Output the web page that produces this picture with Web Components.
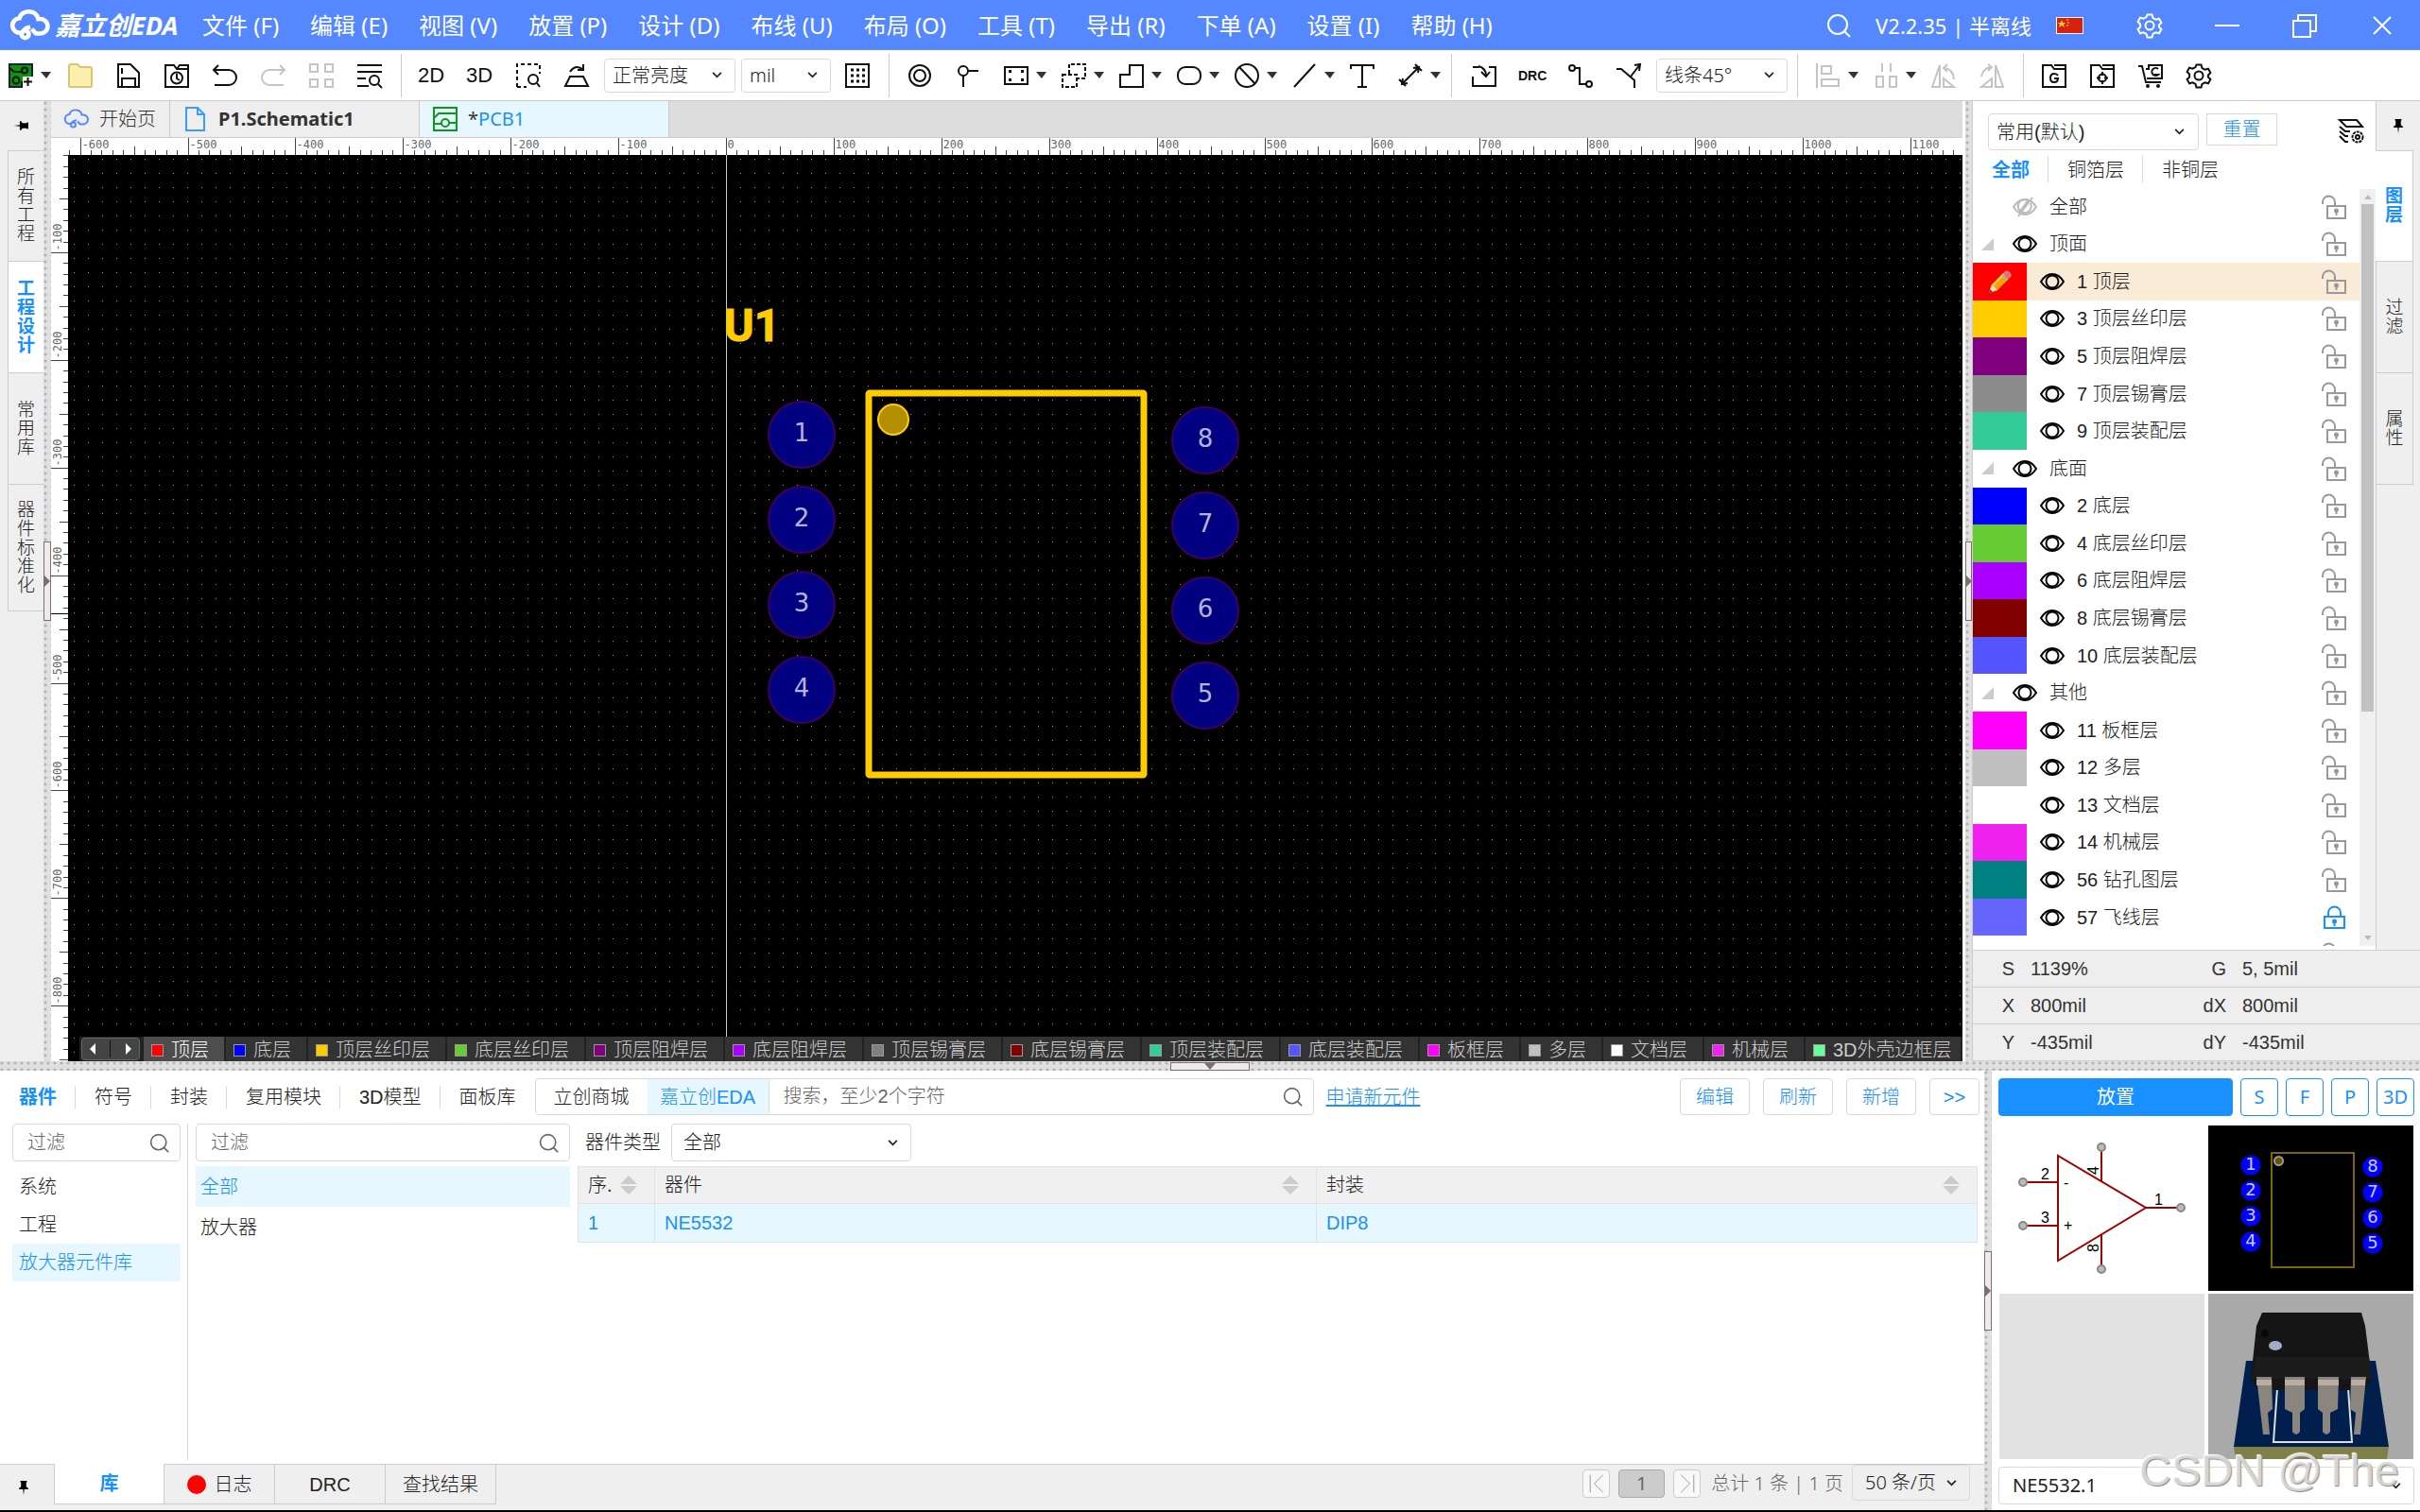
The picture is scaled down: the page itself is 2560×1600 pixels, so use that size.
<!DOCTYPE html>
<html lang="zh-CN">
<head>
<meta charset="utf-8">
<title>嘉立创EDA</title>
<style>
  :root {
    --blue: #1890ff;
    --brand: #5588ff;
    --pale: #e6f7ff;
    --panel: #efefef;
    --line: #cccccc;
    --arial: "Liberation Sans", "Noto Sans CJK SC", sans-serif;
    --segoe: "Noto Sans", "Noto Sans CJK SC", sans-serif;
  }
  body {
    margin: 0;
    font: 300 20px/24px var(--arial);
    color: #222;
    overflow: hidden;
  }
</style>
</head>
<body>
<eda-app></eda-app>

<script>
const RESET = `
  :host, *, *::before, *::after { box-sizing: border-box; }
  button, input, select {
    font: inherit; color: inherit; margin: 0; padding: 0;
    border: 0; background: none; border-radius: 0; outline: 0;
  }
  svg { display: block; flex: none; }
  a { color: var(--blue); }
`;

// every icon is drawn on a 26 x 26 box
const ICONS = {
  cloud: '<path d="M7 18H6a5 5 0 0 1-.5-10C6.500 4.500 10 3 13 3.500c3 .3 5 2.500 5.500 5 4-.5 6.500 2 6.500 5 0 3-2.500 5-5 5h-3l-3-3M7 18l3-3 3-1"/><circle cx="9.500" cy="19" r="2.500"/>',
  search: '<circle cx="12" cy="12" r="10"/><path d="M19 19l6 6"/>',
  gear: '<path d="M10.500 1.500h5l1 3.500 3 1.700 3.500-1 2.400 4.300-2.500 2.500v2l2.500 2.500-2.400 4.300-3.500-1-3 1.700-1 3.500h-5l-1-3.500-3-1.700-3.500 1L.6 17l2.500-2.500v-3L.6 9 3 4.700l3.500 1 3-1.700z"/><circle cx="13" cy="13" r="4.500"/>',
  min: '<path d="M0 13h26"/>',
  restore: '<path d="M1 8h18v17H1zM6 8V2h19v17h-6"/>',
  close: '<path d="M4 4l18 18M22 4L4 22"/>',
  newpcb: '<path d="M1 1h24v24H1z" fill="#0a960a" stroke="#123"/><path d="M1 5l5 4h8M14 25v-6"/><circle cx="17" cy="7.500" r="3"/><circle cx="8" cy="18" r="3.500"/><path d="M8 25v-4M15 14h11v12H15z" fill="#fff" stroke="none"/><path d="M20.500 15v9M16 19.500h9"/>',
  folder: '<path d="M1 24V3q0-2 2-2h7l3 3h10q2 0 2 2v18q0 1-1 1H2q-1 0-1-1z" fill="#fbf0ae" stroke="#dcc56c"/>',
  save: '<path d="M2 25V1h13l9 9v15zM6 25v-9h14v9M6 5v6"/>',
  recent: '<path d="M1 25V2h9l3 4h12v19zM13 6l3-4h9v4"/><circle cx="13" cy="15.500" r="6"/><path d="M13 11v5l3 2"/>',
  undo: '<path d="M6 2L1 7l5 5M1 7h16a8 8 0 0 1 0 16H2"/>',
  redo: '<path d="M20 2l5 5-5 5M25 7H9a8 8 0 0 0 0 16h15"/>',
  tiles: '<path d="M1 1h8v8H1zM17 1h8v8h-8zM1 17h8v8H1zM17 17h8v8h-8z"/>',
  find: '<path d="M0 2h26M0 9h26M0 16h9M0 24h12"/><circle cx="18" cy="18" r="5"/><path d="M22 22l4 4"/>',
  pick: '<path d="M1 25V1h24v10M1 25h10" stroke-dasharray="4 3"/><circle cx="18" cy="17" r="5"/><path d="M22 21l3 4"/>',
  plate: '<path d="M6 14h14l5 10H1zM6 9q5-8 13-3M20 1v6h-6"/>',
  dots: '<path d="M1 1h24v24H1z"/><path d="M6 7h16M6 13h16M6 19h16" stroke-width="3" stroke-dasharray="3 3"/>',
  ring: '<circle cx="13" cy="13" r="11"/><circle cx="13" cy="13" r="6"/>',
  probe: '<circle cx="8" cy="8" r="5"/><path d="M13 8h11M8 13v12"/>',
  board: '<path d="M1 4h24v18H1z"/><path d="M5 7h3v3H5zM18 7h3v3h-3zM5 16h3v3H5zM18 16h3v3h-3z" fill="currentColor" stroke="none"/>',
  region: '<path d="M8 11V1h17v15h-8M1 12h15v13H1z" stroke-dasharray="4 2"/>',
  fill: '<path d="M1 25V12h10V2h14v23z"/>',
  pill: '<rect x="1" y="4" width="24" height="18" rx="8"/>',
  forbid: '<circle cx="13" cy="13" r="12"/><path d="M5 4l17 18"/>',
  line: '<path d="M2 25L24 1"/>',
  text: '<path d="M1 6V2h24v4M13 2v23M8 25h10"/>',
  dim: '<path d="M4 22L22 4M16 5l6-1-1 6M5 16l-1 6 6-1M1 17l7 7M18 1l7 7"/>',
  import: '<path d="M8 4H1M1 14v10h24V4h-7M7 3q8 2 8 10M10 9l5 5 4-5"/>',
  route: '<circle cx="4" cy="5" r="3"/><circle cx="22" cy="22" r="3"/><path d="M7 5h5v17h7"/>',
  branch: '<path d="M0 6h5l14 12v8M15 14L25 1M19 2l6-1-1 7"/>',
  align: '<path d="M1 0v26M6 3h10v8H6zM6 17h18v7H6z"/>',
  spread: '<path d="M9 0v9M18 0v9M3 14h7v11H3zM17 14h7v11h-7z"/>',
  rotl: '<path d="M9 2v23H1zM13 16l11 9H13zM14 5q9 1 10 12M17 1l-4 4 4 4"/>',
  rotr: '<path d="M17 2v23h8zM13 16L2 25h11zM2 14Q4 5 12 4M9 1l4 3-4 4"/>',
  gerber: '<path d="M1 25V2h9l3 4h12v19zM13 2h12v4"/><path d="M17 13q-1-2-4-2-4 0-4 4.500t4 4.500q4 0 4-4h-4"/>',
  bom: '<path d="M1 25V2h9l3 4h12v19zM13 2h12v4"/><circle cx="13" cy="15.500" r="4"/><path d="M13 9v4M13 18v4M7 15.500h4M15 15.500h4"/>',
  cart: '<path d="M0 3h4l4 17h16M8 6h3V2h14v14H9M21 6a4 4 0 1 0 0 6h-4"/><circle cx="10" cy="24" r="1"/><circle cx="21" cy="24" r="1"/>',
  schematic: '<path d="M3 1h12l7 7v17H3zM15 1v7h7"/>',
  pcb: '<path d="M1 1h24v24H1zM1 12l5-5h19M1 18h8"/><circle cx="13" cy="17" r="4"/><path d="M17 17h8"/>',
  pin: '<path d="M8 3h10v2h-1v7l3 2v2h-6l-1 9-1-9H6v-2l3-2V5H8z" fill="currentColor" stroke="none"/>',
  eye: '<path d="M1 13Q6 5 13 5t12 8q-5 8-12 8T1 13z"/><circle cx="13" cy="13" r="6.500"/>',
  eyeoff: '<path d="M1 13Q6 5 13 5t12 8q-5 8-12 8T1 13z"/><path d="M19 9a7 7 0 1 1-3-3M21 3L6 23M17 5L7 19"/>',
  unlock: '<path d="M1 10V8a6.500 6.500 0 0 1 13 0v4M6 12h19v13H6z"/><circle cx="15.500" cy="17" r="2.500" fill="currentColor" stroke="none"/><path d="M15.500 18v4"/>',
  lock: '<path d="M7 11V8a6 6 0 0 1 13 0v4M3 12h21v12H3z"/><circle cx="13.500" cy="17" r="2.500" fill="currentColor" stroke="none"/><path d="M13.500 18v4"/>',
  layers: '<path d="M1 1h18l6 7H8zM1 8l6 5h5M1 13l6 5h3M1 18l6 6h3"/><circle cx="20" cy="19" r="5.500" stroke-width="2" stroke-dasharray="3 1"/><circle cx="20" cy="19" r="2"/>',
  pencil: '<path d="M1 25l3-9 12-12 6 6-12 12z" fill="#f5a30b" stroke="none"/><path d="M5 17L17 5" stroke="#ffd04f"/><path d="M1 25l3-9 6 6z" fill="#f6dcae" stroke="none"/><path d="M1 25l1-4 3 3z" fill="#444" stroke="none"/><path d="M16 4l2-2q2-2 5 1t1 5l-2 2z" fill="#d9777f" stroke="none"/><path d="M14.500 5.500l6 6" stroke="#aaa" stroke-width="2"/>',
  first: '<path d="M5 2v22M21 2L10 13l11 11"/>',
  last: '<path d="M21 2v22M5 2l11 11L5 24"/>',
};

function define(name, css, html) {
  const template = document.createElement('template');
  class El extends HTMLElement {
    constructor() {
      super();
      const root = this.attachShadow({ mode: 'open' });
      template.innerHTML = `<style>${RESET}${css}</style>` + (typeof html === 'function' ? html(this) : html);
      root.appendChild(template.content.cloneNode(true));
    }
  }
  customElements.define(name, El);
}

const list = (items, fn) => items.map(fn).join('');

define('eda-icon', `
  :host { display: block; flex: none; width: var(--size, 26px); height: var(--size, 26px); }
  svg { width: 100%; height: 100%; fill: none; stroke: currentColor; overflow: visible; }
`, el => `<svg viewBox="0 0 26 26" stroke-width="${el.getAttribute('weight') || 2}" aria-hidden="true">${ICONS[el.getAttribute('name')]}</svg>`);

define('eda-select', `
  :host { display: grid; align-items: center; height: var(--h, 36px); }
  select, svg { grid-area: 1 / 1; }
  select {
    appearance: none; width: 100%; height: 100%; padding: 0 30px 0 var(--pad, 8px);
    border: 1px solid #d9d9d9; border-radius: 4px; background: var(--bg, #fff);
  }
  svg { justify-self: end; margin-right: var(--arrow, 14px); pointer-events: none; }
`, el => `<select aria-label="${el.getAttribute('label')}"><option>${el.getAttribute('value')}</option></select>
  <svg width="11" height="7" viewBox="0 0 12 8" fill="none" stroke="#222" stroke-width="2"><path d="M1 1l5 5 5-5"/></svg>`);

define('eda-splitter', `
  :host {
    display: flex; align-items: center; justify-content: center;
    background: radial-gradient(circle at 2px 2px, #b4b4b4 1px, transparent 2px) 0 0 / 7px 7px #e0e0e0;
  }
  button { display: grid; place-items: center; border: 1px solid #7b6f6f; background: #efebeb; }
  .col { width: 100%; height: 84px; }
  .row { width: 84px; height: 9px; align-self: end; }
`, el => el.hasAttribute('row')
  ? '<button class="row" aria-label="折叠"><svg width="12" height="7"><path d="M0 0h12l-6 7z" fill="#7b6f6f"/></svg></button>'
  : '<button class="col" aria-label="折叠"><svg width="6" height="12"><path d="M0 0v12l6-6z" fill="#7b6f6f"/></svg></button>');

const MENUS = ['文件 (F)', '编辑 (E)', '视图 (V)', '放置 (P)', '设计 (D)', '布线 (U)', '布局 (O)', '工具 (T)', '导出 (R)', '下单 (A)', '设置 (I)', '帮助 (H)'];

define('eda-titlebar', `
  :host {
    display: flex; align-items: center; padding: 0 27px 0 12px;
    background: var(--brand); color: #fff; font: 400 24px/32px var(--segoe);
  }
  .logo { display: flex; align-items: center; gap: 6px; --size: 40px; width: 202px; }
  .logo b { font: italic 700 27px/32px var(--segoe); white-space: nowrap; }
  nav { display: flex; gap: 33px; }
  nav button { white-space: nowrap; }
  .right { display: flex; align-items: center; margin-left: auto; }
  .right span { margin: 0 26px; font-size: 22px; white-space: nowrap; }
  .win { display: flex; gap: 56px; margin-left: 57px; }
  .win button { display: block; }
`, `
  <div class="logo"><eda-icon name="cloud" weight="3"></eda-icon><b>嘉立创EDA</b></div>
  <nav>${list(MENUS, m => `<button>${m}</button>`)}</nav>
  <div class="right">
    <button aria-label="搜索"><eda-icon name="search"></eda-icon></button>
    <span>V2.2.35 | 半离线</span>
    <svg width="29" height="18"><path d="M0 0h29v18H0z" fill="#fff"/><path d="M1 1h27v16H1z" fill="#d8200e"/><path d="M6 3l1 3h3L8 8l1 3-3-2-3 2 1-3-2-2h3z" fill="#ffd23c"/><path d="M11 3h2M12 6h2M11 9h2" stroke="#ffd23c"/></svg>
    <div class="win">
      <button aria-label="设置"><eda-icon name="gear"></eda-icon></button>
      <button aria-label="最小化"><eda-icon name="min"></eda-icon></button>
      <button aria-label="还原"><eda-icon name="restore"></eda-icon></button>
      <button aria-label="关闭"><eda-icon name="close"></eda-icon></button>
    </div>
  </div>
`);

define('tool-button', `
  :host { display: block; flex: none; }
  button { display: flex; align-items: center; height: 40px; width: 51px; padding-left: 12px; color: #111; }
  :host([menu]) button { width: 61px; gap: 8px; }
  :host([off]) eda-icon { color: #c4c4c4; }
  :host([first]) button { width: 60px; padding-left: 9px; }
  b { font: 400 22px/26px var(--arial); margin-left: -2px; }
  b.small { font-size: 14px; font-weight: 700; }
`, el => {
  const label = el.getAttribute('label');
  const face = label ? `<b class="${label.length > 2 ? 'small' : ''}">${label}</b>` : `<eda-icon name="${el.getAttribute('name')}"></eda-icon>`;
  const caret = el.hasAttribute('menu') ? '<svg width="11" height="7"><path d="M0 0h11L6 7z" fill="#333"/></svg>' : '';
  return `<button aria-label="${label || el.getAttribute('name')}">${face}${caret}</button>`;
});

const tools = names => list(names.split(' '), n => {
  const [name, flags = ''] = n.split(':');
  return `<tool-button name="${name}" ${flags.includes('m') ? 'menu' : ''} ${flags.includes('o') ? 'off' : ''} ${flags.includes('f') ? 'first' : ''}></tool-button>`;
});

define('eda-toolbar', `
  :host { display: flex; align-items: center; background: #fff; border-bottom: 1px solid var(--line); font: 300 20px/24px var(--segoe); }
  i { width: 1px; height: 46px; background: var(--line); margin: 0 7px; }
  i.wide { margin-right: 9px; }
  eda-select { margin: 0 3px; width: 139px; }
  .unit { width: 95px; }
`, `
  ${tools('newpcb:mf folder save recent undo redo:o tiles:o find')}<i></i>
  <tool-button label="2D"></tool-button><tool-button label="3D"></tool-button>
  ${tools('pick plate')}
  <eda-select label="亮度" value="正常亮度"></eda-select>
  <eda-select class="unit" label="单位" value="mil"></eda-select>
  ${tools('dots')}<i></i>
  ${tools('ring probe board:m region:m fill:m pill:m forbid:m line:m text dim:m')}<i class="wide"></i>
  ${tools('import')}<tool-button label="DRC"></tool-button>${tools('route branch')}
  <eda-select label="布线拐角" value="线条45°"></eda-select><i></i>
  ${tools('align:mo spread:mo rotl:o rotr:o')}<i></i>
  ${tools('gerber bom cart gear')}
`);

// vertical tabs at the window edges
define('side-tabs', `
  :host { display: flex; flex-direction: column; background: var(--panel); font: 300 19px/20px var(--arial); }
  .pin { height: 52px; display: grid; place-items: center; color: #000; --size: 18px; }
  .pin.turn eda-icon { transform: rotate(90deg); }
  button { height: 118px; border: 1px solid var(--line); border-top: 0; display: grid; place-items: center; }
  .pin + button, .pin + button.on { border-top: 1px solid var(--line); }
  button.tall { height: 134px; }
  span { width: 19px; word-break: break-all; }
  .on { background: #fff; color: var(--blue); font-weight: 700; }
  :host([side="left"]) button { margin-left: 8px; border-right: 0; }
  :host([side="right"]) { border-left: 1px solid var(--line); }
  :host([side="right"]) button { margin-right: 7px; border-left: 0; }
  :host([side="right"]) .on { margin-left: -1px; }
`, el => {
  const on = el.getAttribute('on');
  return `<div class="pin ${el.getAttribute('side') === 'left' ? 'turn' : ''}"><eda-icon name="pin"></eda-icon></div>` +
    list(el.getAttribute('tabs').split(','), t => `<button class="${t === on ? 'on' : ''} ${t.length > 4 ? 'tall' : ''}"><span>${t}</span></button>`);
});

define('doc-tabs', `
  :host { display: flex; height: 39px; background: #dcdcdc; border-bottom: 1px solid var(--line); font: 300 20px/24px var(--segoe); }
  button { display: flex; align-items: center; gap: 11px; padding-left: 14px; width: 264px; background: #eee; border-right: 1px solid var(--line); color: #333; white-space: nowrap; }
  .home { width: 126px; }
  .home eda-icon { color: var(--brand); }
  .sch { font-weight: 700; }
  .sch eda-icon { color: #3b9bff; }
  .pcb { background: var(--pale); color: var(--blue); font-weight: 400; }
  .pcb eda-icon { color: #0a9a1a; }
  .pcb i { font-style: normal; color: #333; }
`, `
  <button class="home"><eda-icon name="cloud"></eda-icon>开始页</button>
  <button class="sch"><eda-icon name="schematic"></eda-icon>P1.Schematic1</button>
  <button class="pcb"><eda-icon name="pcb"></eda-icon><span><i>*</i>PCB1</span></button>
`);

const SCALE = 1.139; // screen pixels for one mil

function ruler(vertical) {
  const zero = vertical ? -11 : 714;
  // what the side panels leave free for the board
  const room = vertical ? innerHeight - 641 : innerWidth - 538;
  let marks = '';
  for (let mil = -620; zero + mil * SCALE < room; mil += 10) {
    const at = Math.round(zero + mil * SCALE) + 0.5;
    if (at < (vertical ? 0 : 18)) continue;
    const len = mil % 100 === 0 ? 18 : mil % 50 === 0 ? 9 : 5;
    marks += vertical ? `<path d="M${18 - len} ${at}h${len}"/>` : `<path d="M${at} ${18 - len}v${len}"/>`;
    if (mil % 100 === 0 && at + 30 < room) {
      marks += vertical
        ? `<text transform="translate(11 ${at - 2}) rotate(-90)">${-mil}</text>`
        : `<text x="${at + 1}" y="11">${mil}</text>`;
    }
  }
  if (vertical) marks += `<path d="M0 485.500h18" stroke="#000"/>`;
  return `<svg class="${vertical ? 'v' : 'h'}">${marks}</svg>`;
}

function pad(n, x, y) {
  return `<circle cx="${x}" cy="${y}" r="35" fill="#000080" stroke="#3d0059" stroke-width="2"/>
    <text class="num" x="${x}" y="${y + 7}">${n}</text>`;
}

define('pcb-canvas', `
  :host { display: grid; grid-template: 18px 1fr / 18px 1fr; background: #fff; min-height: 0; overflow: hidden; }
  .h { grid-area: 1 / 1 / 2 / 3; width: 100%; height: 18px; }
  .v { grid-area: 2 / 1; width: 18px; height: 100%; }
  .h, .v { stroke: #444; overflow: hidden; }
  .h text, .v text { font: 12px "DejaVu Sans Mono", monospace; fill: #666; stroke: none; }
  .board { grid-area: 2 / 2; width: 100%; height: 100%; background: #000; }
  .num { font: 26px "DejaVu Sans", sans-serif; fill: #b3b3d9; text-anchor: middle; }
  .ref { font: 700 48px Roboto, sans-serif; fill: #fc0; stroke: #fc0; stroke-width: 1; stroke-linejoin: round; }
  layer-bar { grid-area: 2 / 2; align-self: end; margin-left: 12px; }
`, `
  ${ruler(false)}${ruler(true)}
  <svg class="board">
    <defs><pattern id="grid" x="6" y="4" width="15" height="15" patternUnits="userSpaceOnUse"><path d="M0 0h1v1H0z" fill="#999"/></pattern></defs>
    <rect width="100%" height="100%" fill="url(#grid)"/>
    <path d="M696.500 0v3000" stroke="#ccc"/>
    <text class="ref" x="694" y="197">U1</text>
    <rect x="847" y="252" width="291" height="404" rx="1" fill="none" stroke="#fc0" stroke-width="7"/>
    <circle cx="873" cy="280" r="16" fill="#b38f00" stroke="#fc0" stroke-width="2"/>
    ${list([1, 2, 3, 4], (n, i) => pad(n, 776, 296 + i * 90))}
    ${list([8, 7, 6, 5], (n, i) => pad(n, 1203, 302 + i * 90))}
  </svg>
  <layer-bar></layer-bar>
`);

const BAR = [
  ['顶层', '#f00'], ['底层', '#00f'], ['顶层丝印层', '#fc0'], ['底层丝印层', '#6c3'], ['顶层阻焊层', '#800080'],
  ['底层阻焊层', '#a0f'], ['顶层锡膏层', '#808080'], ['底层锡膏层', '#800000'], ['顶层装配层', '#3c9'], ['底层装配层', '#55f'],
  ['板框层', '#f0f'], ['多层', '#c0c0c0'], ['文档层', '#fff'], ['机械层', '#f022f0'], ['3D外壳边框层', '#6f9'],
];

define('layer-bar', `
  :host { display: flex; height: 26px; background: #222; padding-left: 2px; overflow: hidden; }
  .nav { flex: none; display: flex; align-items: center; justify-content: space-around; width: 62px; margin: 1px 4px 1px 0; background: #444; border: 1px solid #666; border-radius: 4px; }
  .nav i { width: 1px; height: 18px; background: #111; }
  .tab { display: flex; flex: none; align-items: center; gap: 8px; padding: 2px 16px 0 8px; background: #333; border-right: 2px solid #222; color: #ccc; white-space: nowrap; }
  .nav + .tab { background: #4d4d4d; color: #fff; }
  .tab i { width: 13px; height: 13px; border: 1px solid #999; }
  .tab:last-child { flex: 1; padding-right: 0; }
`, `
  <div class="nav">
    <button aria-label="向左"><svg width="8" height="12"><path d="M7 0v12L1 6z" fill="#fff"/></svg></button><i></i>
    <button aria-label="向右"><svg width="8" height="12"><path d="M1 0v12l6-6z" fill="#fff"/></svg></button>
  </div>
  ${list(BAR, ([name, color]) => `<button class="tab"><i style="background:${color}"></i>${name}</button>`)}
`);

define('layer-row', `
  :host { display: flex; align-items: center; padding-right: 14px; min-height: 0; }
  :host([on]) { background: #faebd7; }
  i { align-self: stretch; width: 57px; margin-right: 14px; display: grid; place-items: center; }
  .tri { width: 13px; margin: 0 20px 0 9px; }
  .eye { color: #000; margin-right: 13px; }
  .eye.off { color: #bbb; }
  .lock { margin-left: auto; color: #999; }
  .lock.shut { color: var(--blue); }
`, el => {
  const color = el.getAttribute('color');
  const lead = color
    ? `<i style="background:${color}">${el.hasAttribute('on') ? '<eda-icon name="pencil"></eda-icon>' : ''}</i>`
    : `<svg class="tri" height="13">${el.hasAttribute('all') ? '' : '<path d="M13 0v13H0z" fill="#ccc"/>'}</svg>`;
  const off = el.hasAttribute('all');
  const shut = el.hasAttribute('locked');
  return `${lead}<button class="eye ${off ? 'off' : ''}" aria-label="显示"><eda-icon name="${off ? 'eyeoff' : 'eye'}"></eda-icon></button>
    <span><slot></slot></span>
    <button class="lock ${shut ? 'shut' : ''}" aria-label="锁定"><eda-icon name="${shut ? 'lock' : 'unlock'}"></eda-icon></button>`;
});

const LAYERS = [
  ['顶面'], ['1 顶层', '#f00', 'on'], ['3 顶层丝印层', '#fc0'], ['5 顶层阻焊层', '#800080'], ['7 顶层锡膏层', '#8c8c8c'], ['9 顶层装配层', '#3c9'],
  ['底面'], ['2 底层', '#00f'], ['4 底层丝印层', '#6c3'], ['6 底层阻焊层', '#a0f'], ['8 底层锡膏层', '#800000'], ['10 底层装配层', '#55f'],
  ['其他'], ['11 板框层', '#f0f'], ['12 多层', '#c0c0c0'], ['13 文档层', '#fff'], ['14 机械层', '#f022f0'], ['56 钻孔图层', '#008080'], ['57 飞线层', '#66f', 'locked'],
  ['', '#fff'],
];

define('layer-panel', `
  :host { display: flex; flex-direction: column; background: #fff; min-height: 0; padding-bottom: 4px; }
  .top { display: flex; align-items: start; gap: 8px; padding: 13px 13px 0 16px; --h: 39px; }
  .top eda-select { width: 223px; --arrow: 15px; }
  .reset { width: 75px; height: 34px; border: 1px solid #d9d9d9; color: var(--blue); }
  .cfg { margin: 6px 0 0 auto; color: #111; }
  nav { display: flex; padding: 6px 0 0 20px; height: 40px; }
  nav button { height: 28px; padding: 2px 19px 0 0; margin-right: 20px; border-right: 1px solid #d9d9d9; }
  nav button:last-child { border: 0; }
  nav .on { color: var(--blue); font-weight: 700; }
  .scroll { flex: 1; display: flex; min-height: 0; overflow: hidden; }
  .rows { flex: 1; height: 831px; display: grid; grid-auto-rows: 1fr; }
  .bar { width: 17px; margin-top: 1px; background: #f0f0f0; display: flex; flex-direction: column; align-items: center; padding: 6px 0; }
  .bar i { width: 13px; height: 537px; margin: 5px 0 auto; background: #c1c1c1; }
`, `
  <div class="top">
    <eda-select label="图层配置" value="常用(默认)"></eda-select>
    <button class="reset">重置</button>
    <button class="cfg" aria-label="图层管理"><eda-icon name="layers"></eda-icon></button>
  </div>
  <nav><button class="on">全部</button><button>铜箔层</button><button>非铜层</button></nav>
  <div class="scroll">
    <div class="rows">
      <layer-row all>全部</layer-row>
      ${list(LAYERS, ([name, color, flag = '']) => `<layer-row ${color ? `color="${color}"` : ''} ${flag}>${name}</layer-row>`)}
    </div>
    <div class="bar"><svg width="8" height="5"><path d="M0 5h8L4 0z" fill="#bbb"/></svg><i></i><svg width="8" height="5"><path d="M0 0h8L4 5z" fill="#bbb"/></svg></div>
  </div>
`);

define('status-info', `
  :host { display: block; background: #eee; color: #333; }
  div { display: grid; grid-template-columns: 44px 146px 44px 1fr; column-gap: 17px; height: 39px; align-items: center; border-top: 1px solid #d0d0d0; }
  div:last-child { border-bottom: 1px solid #d0d0d0; height: 40px; }
  b { font-weight: 400; text-align: right; }
`, list([['S', '1139%', 'G', '5, 5mil'], ['X', '800mil', 'dX', '800mil'], ['Y', '-435mil', 'dY', '-435mil']],
  r => `<div><b>${r[0]}</b><span>${r[1]}</span><b>${r[2]}</b><span>${r[3]}</span></div>`));

define('search-box', `
  :host { display: flex; align-items: center; height: 40px; border: 1px solid #d9d9d9; border-radius: 4px; padding: 0 11px 0 15px; color: #666; --size: 21px; }
  input { flex: 1; min-width: 0; height: 100%; }
  input::placeholder { color: #666; opacity: 1; }
`, el => `<input aria-label="${el.getAttribute('hint')}" placeholder="${el.getAttribute('hint')}"><eda-icon name="search"></eda-icon>`);

const SORT = '<svg width="18" height="20"><path d="M0 9h18L9 0zM0 11h18l-9 9z" fill="#ccc"/></svg>';

define('library-panel', `
  :host { display: flex; flex-direction: column; background: #fff; min-width: 0; }
  .head { display: flex; align-items: center; height: 55px; padding: 0 5px 0 20px; gap: 13px; }
  .kinds { display: flex; margin-right: 7px; }
  .kinds button { padding-right: 19px; margin-right: 20px; border-right: 1px solid #d9d9d9; white-space: nowrap; }
  .kinds button:last-child { border: 0; padding: 0; margin: 0; }
  .kinds .on { color: var(--blue); font-weight: 700; }
  .source { display: flex; width: 824px; height: 39px; border: 1px solid #d9d9d9; border-radius: 4px; color: #222; }
  .source button { width: 118px; }
  .source .on { width: 128px; background: var(--pale); color: var(--blue); }
  .source search-box { flex: 1; height: 37px; border-width: 0 0 0 1px; }
  .acts { margin-left: auto; display: flex; gap: 14px; color: var(--blue); }
  .acts button { width: 74px; height: 39px; border: 1px solid #d9d9d9; border-radius: 4px; }
  .acts button:last-child { width: 53px; }
  .body { flex: 1; display: grid; grid-template-columns: 186px 396px 1fr; gap: 8px; padding: 1px 7px 4px 13px; }
  .body > div { display: flex; flex-direction: column; }
  .libs { border-right: 1px solid #d9d9d9; padding-right: 7px; }
  .libs search-box { margin-bottom: 7px; }
  .libs button, .cats button { text-align: left; height: 40px; padding-left: 7px; color: #222; }
  .cats button { height: 43px; padding-left: 5px; }
  .cats search-box { margin-bottom: 5px; }
  .body button.on { background: var(--pale); color: var(--blue); }
  .type { display: flex; align-items: center; gap: 11px; padding-left: 8px; margin-bottom: 5px; color: #222; --h: 40px; }
  .type eda-select { width: 254px; --pad: 12px; }
  table { width: 100%; table-layout: fixed; border-collapse: separate; border-spacing: 0; text-align: left; }
  th, td { height: 40px; padding: 0 10px; font-weight: 300; border: 1px solid #e2e2e2; border-width: 1px 0 1px 1px; }
  th { background: #f0f0f0; }
  td { background: var(--pale); color: var(--blue); height: 41px; border-top: 0; }
  th:last-child, td:last-child { border-right-width: 1px; }
  th div { display: flex; justify-content: space-between; align-items: center; padding-right: 8px; }
  th:first-child { width: 81px; }
`, `
  <div class="head">
    <div class="kinds"><button class="on">器件</button><button>符号</button><button>封装</button><button>复用模块</button><button>3D模型</button><button>面板库</button></div>
    <div class="source"><button>立创商城</button><button class="on">嘉立创EDA</button><search-box hint="搜索，至少2个字符"></search-box></div>
    <a href="#">申请新元件</a>
    <div class="acts"><button>编辑</button><button>刷新</button><button>新增</button><button>&gt;&gt;</button></div>
  </div>
  <div class="body">
    <div class="libs"><search-box hint="过滤"></search-box><button>系统</button><button>工程</button><button class="on">放大器元件库</button></div>
    <div class="cats"><search-box hint="过滤"></search-box><button class="on">全部</button><button>放大器</button></div>
    <div>
      <div class="type"><span>器件类型</span><eda-select label="器件类型" value="全部"></eda-select></div>
      <table>
        <thead><tr><th><div>序.${SORT}</div></th><th><div>器件${SORT}</div></th><th><div>封装${SORT}</div></th></tr></thead>
        <tbody><tr><td>1</td><td>NE5532</td><td>DIP8</td></tr></tbody>
      </table>
    </div>
  </div>
  <bottom-bar></bottom-bar>
`);

define('bottom-bar', `
  :host { display: flex; height: 49px; background: var(--panel); border-top: 1px solid var(--line); }
  .pin { width: 57px; display: grid; place-items: center; --size: 18px; color: #000; padding-right: 7px; }
  .tab { width: 117px; height: 42px; border: 1px solid var(--line); border-width: 0 1px 1px 0; display: flex; align-items: center; justify-content: center; gap: 9px; }
  .tab.on { background: #fff; color: var(--blue); font-weight: 700; margin-top: -1px; height: 43px; border-left-width: 1px; }
  .dot { width: 20px; height: 20px; border-radius: 50%; background: #f00; }
  .pages { margin-left: auto; display: flex; gap: 9px; padding: 5px 15px 0 0; color: #666; font-family: var(--segoe); font-weight: 400; white-space: nowrap; }
  .pages button { width: 29px; height: 30px; border: 1px solid #ccc; border-radius: 4px; display: grid; place-items: center; --size: 22px; color: #888; background: #f8f8f8; }
  .pages .now { width: 49px; background: #ccc; border-color: #aaa; color: #666; }
  .pages span { margin-left: 2px; line-height: 30px; font-weight: 300; }
  .pages eda-select { width: 125px; --h: 38px; --pad: 13px; --bg: #efefef; margin-top: -5px; color: #222; font-weight: 300; }
`, `
  <div class="pin"><eda-icon name="pin"></eda-icon></div>
  <button class="tab on">库</button>
  <button class="tab"><span class="dot"></span>日志</button>
  <button class="tab">DRC</button>
  <button class="tab">查找结果</button>
  <div class="pages">
    <button aria-label="首页"><eda-icon name="first" weight="1"></eda-icon></button>
    <button class="now">1</button>
    <button aria-label="末页"><eda-icon name="last" weight="1"></eda-icon></button>
    <span>总计 1 条 | 1 页</span>
    <eda-select label="每页" value="50 条/页"></eda-select>
  </div>
`);

const PIN = 'fill="#bbb" stroke="#888" stroke-width="2"';
const smallPad = (n, x, y) => `<circle cx="${x}" cy="${y}" r="10.500" fill="#00f"/><text x="${x}" y="${y + 5}">${n}</text>`;

define('preview-panel', `
  :host { display: flex; flex-direction: column; padding: 8px 6px 6px 7px; background: #fff; font: 400 20px/24px var(--segoe); position: relative; }
  .acts { display: flex; gap: 8px; height: 40px; margin-bottom: 10px; }
  .acts button { width: 40px; border: 1px solid var(--blue); border-radius: 4px; color: var(--blue); }
  .acts .place { flex: 1; background: var(--blue); color: #fff; }
  .views { display: grid; grid-template: 175px 175px / 1fr 1fr; gap: 3px 4px; padding: 0 1px; margin-bottom: 8px; }
  .views svg { width: 100%; height: 100%; }
  .sym text { font: 16px "Liberation Sans", sans-serif; fill: #000; }
  .foot { background: #000; }
  .foot text { font: 18px "DejaVu Sans", sans-serif; fill: #ccf; text-anchor: middle; }
  .empty { background: #e2e2e2; }
  .model { background: #a9a9a9; }
  eda-select { --h: 40px; --pad: 14px; }
  .mark {
    position: absolute; right: 22px; bottom: 14px; font: 47px/56px "Liberation Sans", sans-serif;
    color: rgba(225, 225, 225, 0.85); text-shadow: 1px 1px 1px #888, -1px -1px 1px #fff; pointer-events: none; white-space: nowrap;
  }
`, `
  <div class="acts"><button class="place">放置</button><button>S</button><button>F</button><button>P</button><button>3D</button></div>
  <div class="views">
    <svg class="sym" viewBox="0 0 217 175">
      <path d="M62 32v111l93-56zM25 60h37M25 106h37M155 87h37M108 23v37M108 115v37" fill="none" stroke="#a00000" stroke-width="2"/>
      <g ${PIN}><circle cx="25" cy="60" r="4"/><circle cx="25" cy="106" r="4"/><circle cx="192" cy="87" r="4"/><circle cx="108" cy="23" r="4"/><circle cx="108" cy="152" r="4"/></g>
      <text x="44" y="57">2</text><text x="44" y="103">3</text><text x="164" y="84">1</text>
      <text x="68" y="66">-</text><text x="68" y="111">+</text>
      <text transform="translate(105 52) rotate(-90)">4</text><text transform="translate(105 134) rotate(-90)">8</text>
    </svg>
    <svg class="foot" viewBox="0 0 217 175">
      <rect x="67" y="29" width="87" height="121" fill="none" stroke="#806600" stroke-width="2"/>
      <circle cx="74.500" cy="37.500" r="4.500" fill="#665200" stroke="#999" stroke-width="2"/>
      ${list([1, 2, 3, 4], (n, i) => smallPad(n, 45, 42 + i * 27))}${list([8, 7, 6, 5], (n, i) => smallPad(n, 174, 44 + i * 27))}
    </svg>
    <div class="empty"></div>
    <svg class="model" viewBox="0 0 217 175">
      <path d="M40 71h137l14 91H27z" fill="#001f4d"/><path d="M27 162h164l-2 13H29z" fill="#7f7f4a"/>
      <path d="M73 100l-4 57h83l-4-57" fill="none" stroke="#ddd" stroke-width="2"/>
      <path d="M57 20h105l4 14 7 56-7 12H53l-8-12 6-56z" fill="#151515"/><path d="M50 67h120l3 23H45z" fill="#1c1c1c"/>
      <ellipse cx="71" cy="55" rx="7" ry="5" fill="#a5aac8"/><circle cx="60" cy="42" r="4" fill="#080808"/>
      <path d="M51 88h16l1 34-5 4 2 23h-7zM81 88h21l0 34-5 4v20q-4 6-8 0v-20l-8-4zM116 88h22l-1 34-8 4v20q-4 6-8 0v-20l-5-4zM151 88h16l-6 61h-7l2-23-6-4z" fill="#8a857d"/>
      <path d="M51 94h16M81 94h21M116 94h22M151 94h15" stroke="#b9ada4" stroke-width="6"/>
    </svg>
  </div>
  <eda-select label="器件" value="NE5532.1"></eda-select>
  <div class="mark">CSDN @The</div>
`);

define('eda-app', `
  :host { display: grid; grid-template-rows: 53px 54px 1fr 10px 465px; height: 100vh; background: #fff; border-bottom: 2px solid #000; }
  .work { display: grid; grid-template-columns: 46px 8px 1fr 11px 473px; min-height: 0; }
  .editor, .right { display: flex; flex-direction: column; min-width: 0; min-height: 0; }
  pcb-canvas { flex: 1; }
  .right > div { flex: 1; display: grid; grid-template-columns: 426px 1fr; min-height: 0; }
  .bottom { display: grid; grid-template-columns: 1fr 8px 453px; min-height: 0; }
  .work > eda-splitter:nth-of-type(2) { border-left: 3px solid #fff; border-right: 1px solid #ccc; }
`, `
  <eda-titlebar></eda-titlebar>
  <eda-toolbar></eda-toolbar>
  <div class="work">
    <side-tabs side="left" tabs="所有工程,工程设计,常用库,器件标准化" on="工程设计"></side-tabs>
    <eda-splitter></eda-splitter>
    <div class="editor"><doc-tabs></doc-tabs><pcb-canvas></pcb-canvas></div>
    <eda-splitter></eda-splitter>
    <div class="right">
      <div><layer-panel></layer-panel><side-tabs side="right" tabs="图层,过滤,属性" on="图层"></side-tabs></div>
      <status-info></status-info>
    </div>
  </div>
  <eda-splitter row></eda-splitter>
  <div class="bottom"><library-panel></library-panel><eda-splitter></eda-splitter><preview-panel></preview-panel></div>
`);
</script>
</body>
</html>
